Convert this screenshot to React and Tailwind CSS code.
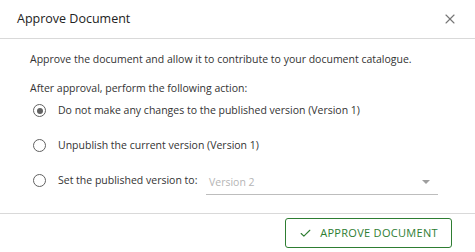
import { X, Check } from "lucide-react";

const options = [
  { label: "Do not make any changes to the published version (Version 1)", checked: true },
  { label: "Unpublish the current version (Version 1)", checked: false },
];

function Radio({ checked }) {
  return (
    <span className="w-[13px] h-[13px] rounded-full border-[1.5px] border-[#616161] flex items-center justify-center shrink-0">
      {checked && <span className="w-[6px] h-[6px] rounded-full bg-[#616161]" />}
    </span>
  );
}

export default function App() {
  return (
    <div className="w-[475px] h-[252px] bg-white text-[#333] font-['Open_Sans',sans-serif] flex flex-col">
      <div className="h-[39px] border-b border-[#d9d9d9] flex items-center justify-between pl-[17px] pr-[17px]">
        <h1 className="text-[12.5px] text-[#222]">Approve Document</h1>
        <X size={16} strokeWidth={1.6} className="text-[#757575]" />
      </div>

      <div className="flex-1 pl-[30px] pr-4 text-[10.5px] leading-[15px]">
        <p className="mt-[13px]">
          Approve the document and allow it to contribute to your document catalogue.
        </p>
        <p className="mt-[14px]">After approval, perform the following action:</p>

        <div className="flex flex-col -mt-[3px]">
          {options.map((o, i) => (
            <div key={i} className="h-[35px] flex items-center gap-[12px] pl-[3px]">
              <Radio checked={o.checked} />
              <span>{o.label}</span>
            </div>
          ))}
          <div className="h-[35px] flex items-center gap-[12px] pl-[3px]">
            <Radio checked={false} />
            <span className="w-[136px] whitespace-nowrap">Set the published version to:</span>
            <div className="w-[232px] h-[24px] mt-[4px] border-b border-[#bdbdbd] flex items-center justify-between pl-[3px] pr-[8px]">
              <span className="text-[#b5b5b5]">Version 2</span>
              <span className="w-0 h-0 border-l-[4px] border-r-[4px] border-t-[4px] border-l-transparent border-r-transparent border-t-[#9e9e9e]" />
            </div>
          </div>
        </div>
      </div>

      <div className="h-[39px] border-t border-[#d9d9d9] flex items-start justify-end pr-[23px] pt-[4px]">
        <button className="h-[30px] w-[167px] border border-[#2e7d32] rounded-[3px] flex items-center justify-center gap-[8px] text-[#2e7d32] text-[11px] font-medium tracking-[0.3px]">
          <Check size={13} strokeWidth={2} />
          APPROVE DOCUMENT
        </button>
      </div>
    </div>
  );
}
